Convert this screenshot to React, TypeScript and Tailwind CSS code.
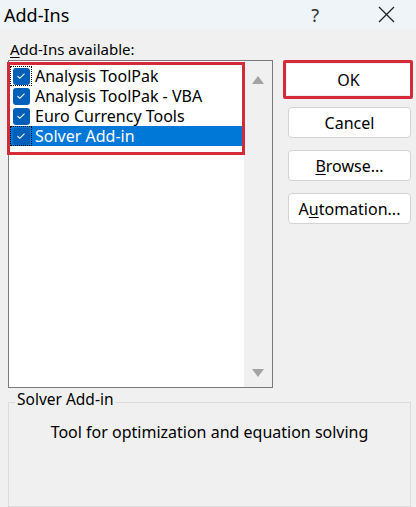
import React from "react";

const font = { fontFamily: '"Noto Sans", "Open Sans", sans-serif' };

function Check({ focus }: { focus?: boolean }) {
  return (
    <div className={"flex h-[20px] w-[22px] shrink-0 items-center justify-center " + (focus ? "outline-1 outline-dotted outline-black -outline-offset-1" : "")}>
      <div className="flex h-[17px] w-[17px] items-center justify-center rounded-[3px] bg-[#005fb8]">
        <svg width="10" height="8" viewBox="0 0 10 8">
          <path d="M1.5 4.2 L3.8 6.3 L8.5 1.6" fill="none" stroke="white" strokeWidth="1.1" />
        </svg>
      </div>
    </div>
  );
}

function Btn({ children, className = "" }: { children: React.ReactNode; className?: string }) {
  return (
    <div className={"flex h-[31px] w-[123px] items-center justify-center rounded-[4px] border border-[#d3d3d3] bg-white text-[16px] text-black " + className}>
      {children}
    </div>
  );
}

export default function App() {
  const items = ["Analysis ToolPak", "Analysis ToolPak - VBA", "Euro Currency Tools", "Solver Add-in"];
  return (
    <div className="flex h-[507px] w-[416px] flex-col overflow-hidden bg-[#f0f0f0] text-black" style={font}>
      <div className="flex h-[29px] shrink-0 items-center bg-[#eff4f9] pl-[4px]">
        <span className="text-[18px] leading-none">Add-Ins</span>
        <span className="ml-[242px] text-[18px] leading-none text-[#333]">?</span>
        <svg className="ml-[59px]" width="17" height="17" viewBox="0 0 17 17">
          <path d="M1 1 L16 16 M16 1 L1 16" stroke="#222" strokeWidth="1.3" />
        </svg>
      </div>
      <div className="flex flex-col pl-[8px] pr-[3px]">
        <div className="flex h-[31px] items-end pb-[3px] pl-[2px] text-[15px] leading-none">
          <span><span className="underline underline-offset-2">A</span>dd-Ins available:</span>
        </div>
        <div className="flex">
          <div className="flex h-[328px] w-[265px] shrink-0 border border-[#7a7a7a] bg-white">
            <div className="relative flex flex-1 flex-col pl-[1px] pt-[5px]">
              {items.map((t, i) => {
                const sel = i === 3;
                return (
                  <div key={t} className={"flex h-[20px] items-center text-[16px] leading-none " + (sel ? "bg-[#0078d7] text-white" : "")}>
                    <Check focus={i === 0 || sel} />
                    <span className="pl-[3px]">{t}</span>
                  </div>
                );
              })}
              <div className="pointer-events-none absolute left-[-2px] top-[1px] h-[93px] w-[238px] border-[3px] border-[#d42b3a]" />
            </div>
            <div className="flex w-[28px] shrink-0 flex-col items-center justify-between bg-[#f0f0f0] pb-[10px] pt-[15px]">
              <svg width="12" height="8" viewBox="0 0 12 8"><path d="M6 0 L12 8 L0 8 Z" fill="#a3a3a3" /></svg>
              <svg width="12" height="8" viewBox="0 0 12 8"><path d="M0 0 L12 0 L6 8 Z" fill="#a3a3a3" /></svg>
            </div>
          </div>
          <div className="ml-[15px] mt-[3px] flex shrink-0 flex-col gap-[12px]">
            <div className="-ml-[5px] -mr-[2px] -mt-[3px] mb-[-4px] w-[130px] rounded-[2px] border-[3px] border-[#d42b3a] p-[1px]">
              <Btn className="w-[122px] h-[28px] rounded-none border-0">OK</Btn>
            </div>
            <Btn>Cancel</Btn>
            <Btn><span><span className="underline underline-offset-2">B</span>rowse...</span></Btn>
            <Btn><span>A<span className="underline underline-offset-2">u</span>tomation...</span></Btn>
          </div>
        </div>
        <div className="relative mt-[14px] h-[105px] w-[403px] border border-[#dcdcdc]">
          <span className="absolute left-[6px] top-[-11px] bg-[#f0f0f0] px-[2px] text-[15.5px] leading-none">Solver Add-in</span>
          <div className="pt-[21px] text-center text-[16px] leading-none">Tool for optimization and equation solving</div>
        </div>
      </div>
    </div>
  );
}
